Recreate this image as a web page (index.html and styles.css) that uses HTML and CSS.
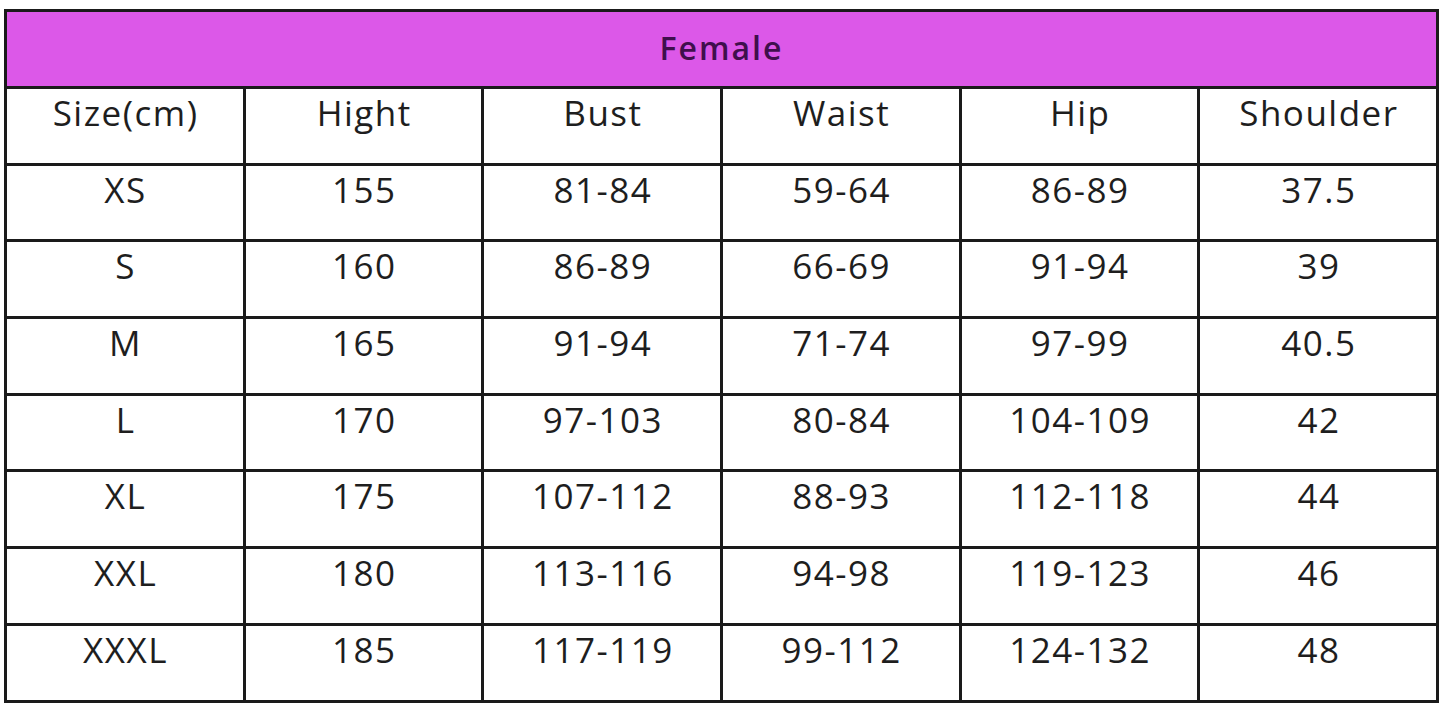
FILE: index.html
```html
<!DOCTYPE html>
<html>
<head>
<meta charset="utf-8">
<link rel="stylesheet" href="styles.css">
</head>
<body>
<table class="chart">
  <tr class="title-row"><th colspan="6" class="title">Female</th></tr>
  <tr class="row head"><td>Size(cm)</td><td>Hight</td><td>Bust</td><td>Waist</td><td>Hip</td><td>Shoulder</td></tr>
  <tr class="row"><td>XS</td><td>155</td><td>81-84</td><td>59-64</td><td>86-89</td><td>37.5</td></tr>
  <tr class="row"><td>S</td><td>160</td><td>86-89</td><td>66-69</td><td>91-94</td><td>39</td></tr>
  <tr class="row"><td>M</td><td>165</td><td>91-94</td><td>71-74</td><td>97-99</td><td>40.5</td></tr>
  <tr class="row"><td>L</td><td>170</td><td>97-103</td><td>80-84</td><td>104-109</td><td>42</td></tr>
  <tr class="row"><td>XL</td><td>175</td><td>107-112</td><td>88-93</td><td>112-118</td><td>44</td></tr>
  <tr class="row"><td>XXL</td><td>180</td><td>113-116</td><td>94-98</td><td>119-123</td><td>46</td></tr>
  <tr class="row"><td>XXXL</td><td>185</td><td>117-119</td><td>99-112</td><td>124-132</td><td>48</td></tr>
</table>
</body>
</html>
```
FILE: styles.css
```css
html, body {
  margin: 0;
  background: #ffffff;
}
body {
  padding: 9px 0 0 4px;
  font-family: "Open Sans", "Noto Sans", sans-serif;
  color: #1e1e1e;
}
.chart {
  border-collapse: collapse;
  table-layout: fixed;
  width: 1435px;
}
.chart td, .chart th {
  border: 3px solid #1a1a1a;
  text-align: center;
  vertical-align: top;
  padding: 0;
}
.title {
  background: #dc58e8;
  color: #3f0f4c;
  font-weight: 600;
  font-size: 32px;
  letter-spacing: 2px;
  padding-left: 2px;
  height: 74px;
  line-height: 72px;
  border-bottom-color: #2a0f30;
}
.row td {
  height: 73.7px;
  font-size: 35px;
  font-weight: 500;
  letter-spacing: 1.5px;
  padding-left: 1.5px;
  line-height: 48px;
}
```
